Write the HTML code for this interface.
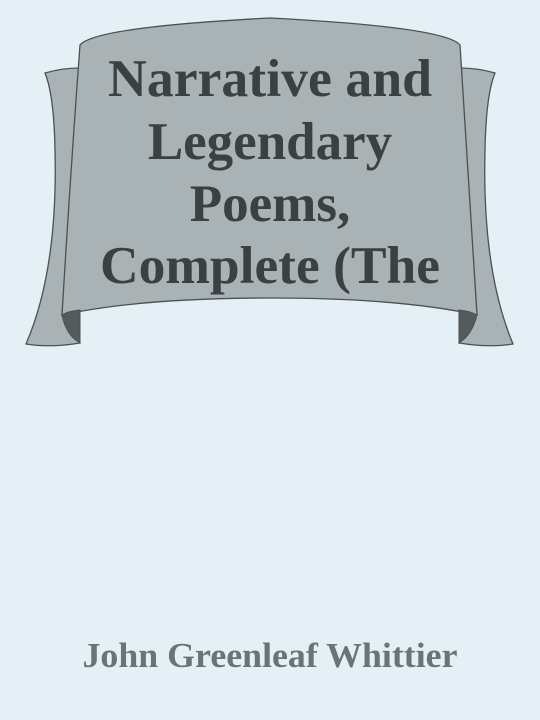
<!DOCTYPE html>
<html><head><meta charset="utf-8"><style>
html,body{margin:0;padding:0;}
body{width:540px;height:720px;background:#e4f0f5;overflow:hidden;}
svg{display:block}
</style></head><body>
<svg width="540" height="720" viewBox="0 0 540 720" xmlns="http://www.w3.org/2000/svg">
<rect width="540" height="720" fill="#e4f0f5"/>
<g stroke="#4a5153" stroke-width="1.3" fill="#a9b2b4">
<path d="M45,73 Q62,68 80,68 L62,315 L80,343 Q50,348 26,344 Q58,270 55,150 Q54,95 45,73 Z"/>
<path d="M495,73 Q478,68 460,68 L477,315 L459,343 Q490,348 513,344 Q482,270 485,150 Q486,95 495,73 Z"/>
<path d="M80,45 Q95,27 270,18 Q445,27 460,45 L477,315 Q400,298 270,298 Q140,298 62,315 Q70,180 80,45 Z"/>
</g>
<path d="M62,315 Q66,335 80,343 L80,310 Q68,311 62,315 Z" fill="#555a5c" stroke="#4a5153" stroke-width="1"/>
<path d="M477,315 Q472,335 459,343 L459,310 Q470,311 477,315 Z" fill="#555a5c" stroke="#4a5153" stroke-width="1"/>
<g font-family="Liberation Serif, serif" font-weight="bold" font-size="53" fill="#3b4042" text-anchor="middle">
<text x="270" y="96" textLength="324" lengthAdjust="spacingAndGlyphs">Narrative and</text>
<text x="270" y="159">Legendary</text>
<text x="270" y="221">Poems,</text>
<text x="270" y="283" textLength="340" lengthAdjust="spacingAndGlyphs">Complete (The</text>
</g>
<text x="270" y="667" font-family="Liberation Serif, serif" font-weight="bold" font-size="35" fill="#6b7376" text-anchor="middle" textLength="375" lengthAdjust="spacingAndGlyphs">John Greenleaf Whittier</text>
</svg>
</body></html>
